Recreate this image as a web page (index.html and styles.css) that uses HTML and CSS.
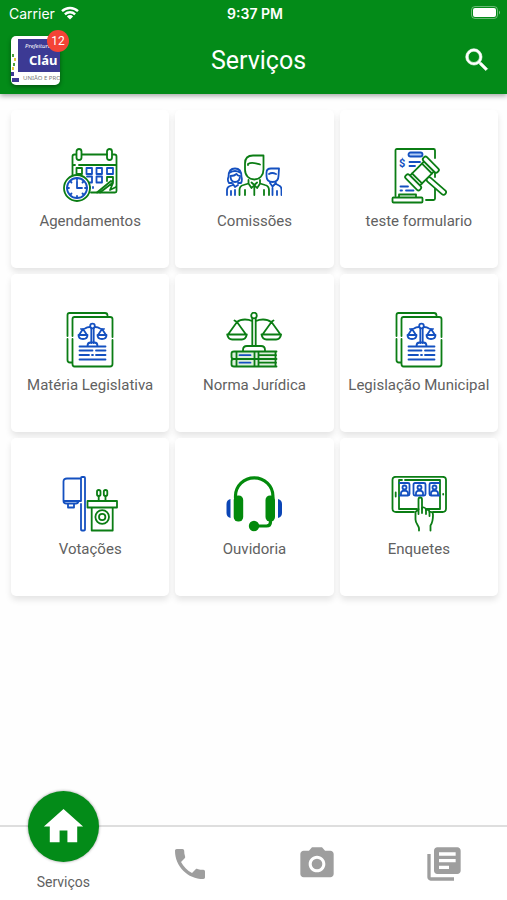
FILE: index.html
```html
<!DOCTYPE html>
<html lang="pt-BR">
<head>
    <meta charset="UTF-8">
    <meta name="viewport" content="width=device-width, initial-scale=1.0">
    <title>Serviços</title>
    <link rel="stylesheet" href="styles.css">
</head>
<body>
    <header class="header">
        <div class="status">
            <div class="carrier">
                <span>Carrier</span>
                <svg class="wifi" viewBox="0 0 18 14">
                    <path d="M1 5.200a11.500 11.500 0 0 1 16 0M3.900 8.300a7.300 7.300 0 0 1 10.200 0" fill="none" stroke="#fff" stroke-width="2.400"/>
                    <path d="M9 13.500 5.900 10.400a4.400 4.400 0 0 1 6.200 0z" fill="#fff"/>
                </svg>
            </div>
            <span class="clock">9:37 PM</span>
            <svg class="battery" viewBox="0 0 30 14">
                <rect x="0.500" y="0.500" width="26" height="12" rx="3.500" fill="none" stroke="#fff" stroke-opacity=".4"/>
                <rect x="2" y="2" width="23" height="9" rx="2" fill="#fff"/>
                <path d="M28 4.500q2 2 0 4z" fill="#fff" fill-opacity=".5"/>
            </svg>
        </div>
        <div class="bar">
            <a class="city" href="#">
                <span class="logo">
                    <svg class="dots" viewBox="0 0 8 49">
                        <path d="M1 18h2v3H1zM2 27h2v3H2z" fill="#4a9b3c"/>
                        <path d="M3 22h2v3H3zM1 31h2v3H1z" fill="#e3c93b"/>
                        <path d="M0 36h3v4H0zM1 42h8v4H1z" fill="#3c3a94"/>
                    </svg>
                    <span class="logo-name">
                        <em>Prefeitura</em>
                        <strong>Cláu</strong>
                    </span>
                    <small>UNIÃO E PRO</small>
                </span>
                <span class="badge">12</span>
            </a>
            <h1>Serviços</h1>
            <button class="search" type="button" aria-label="Buscar">
                <svg viewBox="0 0 24 24"><path d="M15.500 14h-.79l-.28-.27A6.470 6.470 0 0 0 16 9.500 6.500 6.500 0 1 0 9.500 16c1.610 0 3.090-.59 4.230-1.570l.27.28v.79l5 4.990L20.490 19l-4.990-5zm-6 0C7.010 14 5 11.990 5 9.500S7.010 5 9.500 5 14 7.010 14 9.500 11.990 14 9.500 14z"/></svg>
            </button>
        </div>
    </header>

    <main class="grid">
        <a class="card" href="#">
            <svg class="icon" viewBox="0 0 56 56">
                <path class="g" d="M14 6.500h-1.500q-2 0-2 2V27M20 6.500h25M51 6.500h1.500q2 0 2 2V43q0 1.500-1.500 1.500H29M17 17h37M12 17h1"/>
                <rect class="g" x="14.500" y="1" width="5" height="11" rx="2.500"/>
                <rect class="g" x="45" y="1" width="5" height="11" rx="2.500"/>
                <path class="g" d="M14.500 26v-6H20v6zM35 44.500 49 33l2 1.500L38 44.500M51 35l-3 7 6-3M45 33v-4h6v5"/>
                <path class="b" d="M24.500 20H30v6h-5.500zM34.500 20H40v6h-5.500zM45 20h6v6h-6zM25 28.500h5v6h-3M34.500 28.500H40v6h-5.500zM28 39v1M31 39v1"/>
                <circle class="g" cx="15" cy="40" r="13"/>
                <circle class="b" cx="15" cy="40" r="10"/>
                <path class="b" d="M15 33.500V40h5M15 30v2M15 48v2M5 40h2M23 40h2M8.500 33.500l1 1M21.500 33.500l-1 1M8.500 46.500l1-1M21.500 46.500l-1-1"/>
            </svg>
            <span>Agendamentos</span>
        </a>
        <a class="card" href="#">
            <svg class="icon" viewBox="0 0 56 56">
                <path class="g" d="M37.500 7.500H27c-5 0-8 3-8 8v6c0 6 4 10 9.300 10s9.200-4 9.200-10zM22 17v-1c4-2.500 8-.5 12 .5"/>
                <path class="g" d="M13.500 47v-5q0-4 4-5l5-1.500V32M34 32v3.500l5 1.500q4 1 4 5v5M19 42v5M38 42v5M28.300 39v8M22.500 35.500l3 4.500 2.800-3 2.800 3 3-4.500M25.500 34.500l2.800 2.500 2.800-2.500"/>
                <path class="b" d="M3 35q-2-3-.5-6c0-5 2-8.500 6.500-8.500s6.500 3.500 6.500 8.500q1 3-.5 6H12M3 35h3"/>
                <path class="b" d="M4.500 28c4 0 5-1 6-2 1 1.500 2 2 3.500 2 0 4-2 6-5 6s-4.500-2-4.500-6zM1 47v-5q0-3 3-4l3-1M5 43v4M9 42v5M7 36l2 3 3-2M4 24.500q5-3 10 0"/>
                <path class="b" d="M53 20.500h-8q-4.500 0-4.500 4V28c0 4 2.500 6 6 6s6-2 6-6zM43 26q3-2 7 0M44 35l2.500 3.500L50 35M50 36l3 1.500q2.500 1 2.500 4V47M46.500 40v7M51 43v4"/>
            </svg>
            <span>Comissões</span>
        </a>
        <a class="card" href="#">
            <svg class="icon" viewBox="0 0 56 56">
                <path class="g" d="M4.500 48V2.500Q4.500 1 6 1h36.500Q44 1 44 2.500V10M44 38v12.500q0 1.500-1.500 1.500H35M44 24v5"/>
                <rect class="g" x="1.500" y="49.500" width="30" height="5" rx="1"/>
                <path class="g" d="M8 49v-2.500h17V49"/>
                <rect class="b tint" x="17.500" y="4.500" width="14" height="4" rx="2"/>
                <path class="b" d="M18.500 14H29M18.500 18H24M9.500 38.500H17M9.500 42.500H11M15 42.500h7.500"/>
                <text class="money" x="8" y="19">$</text>
                <g class="g fill" transform="translate(31 25.500) rotate(-45)">
                    <rect x="-2.500" y="7" width="5" height="24" rx="2.500" transform="rotate(-4)"/>
                    <rect x="-10" y="-7" width="20" height="14"/>
                    <rect x="-15" y="-10" width="5" height="20" rx="2"/>
                    <rect x="10" y="-10" width="5" height="20" rx="2"/>
                    <path d="M-7-7V7M7-7V7"/>
                </g>
            </svg>
            <span>teste formulario</span>
        </a>
        <a class="card" href="#">
            <svg class="icon" viewBox="0 0 56 56">
                <use href="#law-doc"/>
            </svg>
            <span>Matéria Legislativa</span>
        </a>
        <a class="card" href="#">
            <svg class="icon" viewBox="0 0 56 56">
                <g class="g">
                    <circle cx="28" cy="3.500" r="2.800"/>
                    <path d="M26.300 6.500V34M29.700 6.500V34M26 9q-3-1.500-7-1.500-5 0-8 2.500L8.500 8.500M30 9q3-1.500 7-1.500 5 0 8 2.500l2.500-1.500"/>
                    <path d="M11 10 2 22.500M11 10l9 12.500M1.200 22.500h19.600q-1 5-5 5H6.200q-4 0-5-5zM45.500 10l-9 12.500M45.500 10l9 12.500M35.500 22.500h19.600q-1 5-5 5h-9.600q-4 0-5-5z"/>
                    <path d="M17 39v-1q0-4 4-4h14q4 0 4 4v1"/>
                    <path class="pale" d="M50.500 39.500H8q-2.500 0-2.500 2V45q0 2 2.500 2h42.500M50.500 47H8q-2.500 0-2.500 2v3.500q0 2 2.500 2h42.500M49.500 40v6.500M49.500 47.500V54"/>
                    <path d="M10.500 40v14M28.500 40v14M32.500 40v14M33 43.200h17M33 50.700h17"/>
                </g>
                <path class="b" d="M13.500 43.200h11M13.500 50.700h11"/>
            </svg>
            <span>Norma Jurídica</span>
        </a>
        <a class="card" href="#">
            <svg class="icon" viewBox="0 0 56 56">
                <g id="law-doc">
                    <path class="g" d="M5.500 24V3q0-2 2-2H43q2.500 0 2.500 2.500M5.500 27v21q0 2.500 2.500 2.500h2"/>
                    <path class="g" d="M10.500 24V7q0-2 2-2H48q2.500 0 2.500 2v18M10.500 27v25q0 2.500 2 2.500H48q2.500 0 2.500-2.500V28"/>
                    <circle class="b" cx="30.500" cy="14" r="2.300"/>
                    <path class="b" d="M29.300 16.500V31M31.700 16.500V31M28 15q-3 0-5 1.500-2 1-4 .5M33 15q3 0 5 1.500 2 1 4 .5M21 17l-4 6M21 17l4 6M16.500 23h9q0 4-4.500 4t-4.500-4zM40 17l-4 6M40 17l4 6M35.500 23h9q0 4-4.500 4t-4.500-4z"/>
                    <path class="b" d="M25.500 34q0-3.500 3-3.500h4q3 0 3 3.500M17.500 34.500h26M17.500 38.500h13M34 38.500h9.500M17.500 43H27M30 43h1M34 43h9.500M17.500 47.500h26"/>
                </g>
            </svg>
            <span>Legislação Municipal</span>
        </a>
        <a class="card" href="#">
            <svg class="icon" viewBox="0 0 56 56">
                <path class="b" d="M19 2.500H5q-3.500 0-3.500 3V25q0 2.500 3 2.500H14q2 0 2.500-2.500M1.500 25H19M6 28v3.500h6V28M19 25V2q0-1 1-1h2q1 0 1 1v51.500q0 1-1 1h-2q-1 0-1-1V28"/>
                <path class="g" d="M25.500 25H55v6.500H25.500zM29.700 31.500v23h21v-23"/>
                <circle class="g" cx="40.200" cy="41" r="6.800"/>
                <circle class="g" cx="40.200" cy="41" r="3.200"/>
                <rect class="g" x="35" y="14" width="3.500" height="6" rx="1.700"/>
                <rect class="g" x="41.800" y="14" width="3.500" height="6" rx="1.700"/>
                <path class="g" d="M36.700 20v4.500M43.500 20v4.500"/>
            </svg>
            <span>Votações</span>
        </a>
        <a class="card" href="#">
            <svg class="icon" viewBox="0 0 56 56">
                <path d="M9.500 22v-2a18.700 18.200 0 0 1 37.400 0v2M44.500 43v3q0 4-4 4H28" fill="none" stroke="#038a0c" stroke-width="3.200"/>
                <rect x="7.700" y="19.500" width="9.500" height="26" rx="4.500" fill="#038a0c"/>
                <rect x="39.500" y="19.500" width="9.500" height="26" rx="4.500" fill="#038a0c"/>
                <circle cx="28" cy="50" r="5.200" fill="#038a0c"/>
                <path d="M4.500 23v19Q.5 41 .5 37v-9q0-4 4-5zM52 23v19q4-1 4-5v-9q0-4-4-5z" fill="#0b45b5"/>
            </svg>
            <span>Ouvidoria</span>
        </a>
        <a class="card" href="#">
            <svg class="icon" viewBox="0 0 56 56">
                <path class="g" d="M23 36H5q-3.500 0-3.500-3.500V4Q1.500.8 5 .8h46.500Q55 .8 55 4v28.500q0 3.500-3.500 3.500H42"/>
                <path class="g" d="M26 33H8V4h3M14 4h35v29H35M4.700 16.500v4M52.200 18v.5"/>
                <path class="b" d="M8.500 7H17q1.500 0 1.500 1.500V18q0 1.500-1.500 1.500H8.500M48.500 7H40q-1.500 0-1.500 1.500V18q0 1.500 1.500 1.500h8.500"/>
                <rect class="b" x="22.500" y="7" width="12" height="12.500" rx="1.500"/>
                <path class="b" d="M25 19v-2q0-2 3.500-2.500 3.500.5 3.500 2.500v2M10 19v-2q0-2 3.500-2.500Q17 15 17 17v2M40 19v-2q0-2 3.500-2.500Q47 15 47 17v2"/>
                <circle class="b" cx="28.500" cy="11.500" r="2"/>
                <circle class="b" cx="13.500" cy="11.500" r="2"/>
                <circle class="b" cx="43.500" cy="11.500" r="2"/>
                <path class="g fill" d="M28 54.500v-2c0-3-3.500-5-3.500-9V36l3-2.500V23.500q0-2 1.700-2t1.800 2V33q0-2 2-1.500t2 2.500q3-1 3.500 2 3.500-1 3.500 3 0 7-2.500 10.500v5"/>
                <path class="g" d="M31 32v5M35 34v4M38.500 36v4M27.500 33v5"/>
                <path d="M29 55h7.500" stroke="#fff" stroke-width="2"/>
            </svg>
            <span>Enquetes</span>
        </a>
    </main>

    <nav class="tabs">
        <a class="tab active" href="#">
            <span class="home"><svg viewBox="0 0 24 24"><path d="M10 20v-6h4v6h5v-8h3L12 3 2 12h3v8z"/></svg></span>
            <span>Serviços</span>
        </a>
        <a class="tab" href="#" aria-label="Telefones">
            <svg viewBox="0 0 24 24"><path d="M6.620 10.790c1.440 2.830 3.760 5.140 6.590 6.590l2.200-2.200c.27-.27.67-.36 1.020-.24 1.120.37 2.330.57 3.570.57.55 0 1 .45 1 1V20c0 .55-.45 1-1 1-9.390 0-17-7.610-17-17 0-.55.45-1 1-1h3.500c.55 0 1 .45 1 1 0 1.250.2 2.450.57 3.570.11.35.03.74-.25 1.020l-2.200 2.200z"/></svg>
        </a>
        <a class="tab" href="#" aria-label="Câmera">
            <svg viewBox="0 0 24 24"><circle cx="12" cy="12" r="3.200"/><path d="M9 2 7.170 4H4c-1.100 0-2 .9-2 2v12c0 1.100.9 2 2 2h16c1.100 0 2-.9 2-2V6c0-1.100-.9-2-2-2h-3.170L15 2H9zm3 15c-2.760 0-5-2.240-5-5s2.240-5 5-5 5 2.240 5 5-2.240 5-5 5z"/></svg>
        </a>
        <a class="tab" href="#" aria-label="Notícias">
            <svg viewBox="0 0 24 24"><path d="M4 6H2v14c0 1.100.9 2 2 2h14v-2H4V6zm16-4H8c-1.100 0-2 .9-2 2v12c0 1.100.9 2 2 2h12c1.100 0 2-.9 2-2V4c0-1.100-.9-2-2-2zm-1 9H9V9h10v2zm-4 4H9v-2h6v2zm4-8H9V5h10v2z"/></svg>
        </a>
    </nav>
</body>
</html>
```
FILE: styles.css
```css
* { box-sizing: border-box; }
body {
    margin: 0;
    min-height: 100vh;
    display: flex;
    flex-direction: column;
    background-color: #fefefe;
    color: #616161;
    font-family: Roboto, "Liberation Sans", sans-serif;
}
a {
    color: inherit;
    text-decoration: none;
}

/* header */
.header {
    background-color: #038b18;
    color: white;
    box-shadow: 0 2px 5px rgba(0,0,0,0.35);
}
.status {
    display: grid;
    grid-template-columns: 1fr auto 1fr;
    align-items: center;
    height: 26px;
    padding: 0 6px 0 9px;
    font-family: Inter, Roboto, sans-serif;
    font-size: 14px;
}
.carrier {
    display: flex;
    align-items: center;
    gap: 6px;
}
.wifi {
    width: 18px;
    height: 14px;
}
.clock {
    font-weight: 600;
}
.battery {
    width: 30px;
    height: 14px;
    justify-self: end;
}
.bar {
    display: flex;
    align-items: center;
    height: 68px;
    padding: 0 10px 0 11px;
}
h1 {
    flex: 1;
    margin: 0;
    font-size: 25px;
    font-weight: 400;
    text-align: center;
}
.city {
    position: relative;
    width: 49px;
    border-radius: 5px;
    box-shadow: 0 2px 4px rgba(0,0,0,0.4);
}
.logo {
    display: flex;
    flex-direction: column;
    position: relative;
    height: 49px;
    padding: 3px 0 0 7px;
    overflow: hidden;
    border-radius: 5px;
    background-color: white;
    color: #777;
    font-family: "Noto Sans", sans-serif;
    white-space: nowrap;
}
.dots {
    position: absolute;
    left: 0;
    top: 0;
    width: 8px;
    height: 49px;
}
.logo-name {
    display: flex;
    flex-direction: column;
    height: 33px;
    padding: 3px 0 0 7px;
    background-color: #3c3a94;
    color: white;
}
.logo-name em {
    font-size: 6px;
    line-height: 9px;
}
.logo-name strong {
    padding-left: 4px;
    font-size: 13px;
    line-height: 18px;
}
.logo small {
    padding-left: 5px;
    font-size: 6px;
    line-height: 13px;
}
.badge {
    position: absolute;
    top: -6px;
    right: -9px;
    width: 22px;
    height: 22px;
    border-radius: 50%;
    background-color: #f44336;
    font-size: 12px;
    line-height: 22px;
    text-align: center;
}
.search {
    width: 40px;
    height: 40px;
    padding: 5px;
    border: 0;
    background: none;
}
.search svg {
    display: block;
    fill: white;
    stroke: white;
    stroke-width: 0.5;
}

/* services */
.grid {
    flex: 1;
    display: grid;
    grid-template-columns: repeat(3, 1fr);
    align-content: start;
    gap: 6px;
    padding: 16px 9px 16px 11px;
}
.card {
    display: flex;
    flex-direction: column;
    align-items: center;
    gap: 7px;
    height: 158px;
    padding-top: 38px;
    border-radius: 5px;
    background-color: white;
    box-shadow: 0 4px 6px rgba(0,0,0,0.1);
    font-size: 15px;
    line-height: 20px;
    white-space: nowrap;
}
.icon {
    width: 56px;
    height: 56px;
}
.g, .b {
    fill: none;
    stroke-width: 1.8;
    stroke-linecap: round;
    stroke-linejoin: round;
}
.g { stroke: #0b7d14; }
.b { stroke: #1450c0; }
.fill { fill: white; }
.tint { fill: #b4cdf5; }
.pale { fill: #dcefdc; }
.money {
    fill: #1450c0;
    font-size: 11px;
    font-weight: bold;
}

/* bottom bar, the active tab rises over its top edge */
.tabs {
    display: grid;
    grid-template-columns: repeat(4, 1fr);
    grid-template-rows: 100%;
    height: 75px;
    border-top: 2px solid #dedede;
    background-color: white;
}
.tab {
    display: flex;
    flex-direction: column;
    align-items: center;
    justify-content: center;
    font-size: 14px;
    line-height: 16px;
}
.tab svg {
    width: 40px;
    height: 40px;
    fill: #9e9e9e;
}
.tab.active {
    justify-content: flex-end;
    gap: 12px;
    padding-bottom: 10px;
}
.home {
    display: flex;
    align-items: center;
    justify-content: center;
    flex: none;
    width: 71px;
    height: 71px;
    border-radius: 50%;
    background-color: #038b18;
    box-shadow: 0 0 3px rgba(0,0,0,0.4);
}
.tab .home svg {
    width: 47px;
    height: 47px;
    fill: white;
}
```
